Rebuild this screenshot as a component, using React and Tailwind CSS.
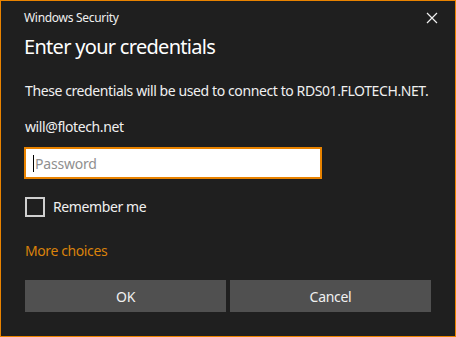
import React from "react";

export default function App() {
  const font = { fontFamily: '"Noto Sans", "Open Sans", sans-serif' };
  return (
    <div
      className="w-[456px] h-[337px] bg-[#1f1f1f] border border-[#e98300] flex flex-col text-white overflow-hidden"
      style={font}
    >
      <div className="flex items-center justify-between pl-[23px] pr-[17px] pt-[7px] h-[26px]">
        <span className="text-[12px] leading-[16px] tracking-[-0.3px] text-[#f0f0f0]">Windows Security</span>
        <svg width="12" height="12" viewBox="0 0 12 12" className="mt-[1px]">
          <path d="M1 1 L11 11 M11 1 L1 11" stroke="#f0f0f0" strokeWidth="1.2" />
        </svg>
      </div>
      <div className="pl-[23px] mt-[6px] text-[20px] leading-[28px] tracking-[-0.7px] text-white">Enter your credentials</div>
      <div className="pl-[24px] mt-[20px] text-[14px] leading-[20px] tracking-[-0.4px] text-[#f0f0f0]">
        These credentials will be used to connect to RDS01.FLOTECH.NET.
      </div>
      <div className="pl-[24px] mt-[16px] text-[14px] leading-[20px] tracking-[-0.4px] text-[#f0f0f0]">will@flotech.net</div>
      <div className="pl-[23px] mt-[10px]">
        <div className="w-[298px] h-[32px] bg-white border-2 border-[#e98300] flex items-center pl-[7px]">
          <div className="w-[1px] h-[17px] bg-black" />
          <span className="text-[14px] tracking-[-0.2px] text-[#8f8f8f] ml-[1px]">Password</span>
        </div>
      </div>
      <div className="pl-[24px] mt-[18px] flex items-center">
        <div className="w-[20px] h-[20px] border-2 border-[#cfcfcf]" />
        <span className="ml-[8px] text-[14px] leading-[20px] tracking-[-0.4px] text-[#f0f0f0]">Remember me</span>
      </div>
      <div className="pl-[24px] mt-[24px] text-[14px] leading-[20px] tracking-[-0.4px] text-[#d9820b]">More choices</div>
      <div className="pl-[24px] pr-[24px] mt-[19px] flex gap-[4px]">
        <button className="flex-1 h-[32px] bg-[#505050] text-[14px] tracking-[-0.3px] text-[#f0f0f0]">OK</button>
        <button className="flex-1 h-[32px] bg-[#505050] text-[14px] tracking-[-0.3px] text-[#f0f0f0]">Cancel</button>
      </div>
    </div>
  );
}
